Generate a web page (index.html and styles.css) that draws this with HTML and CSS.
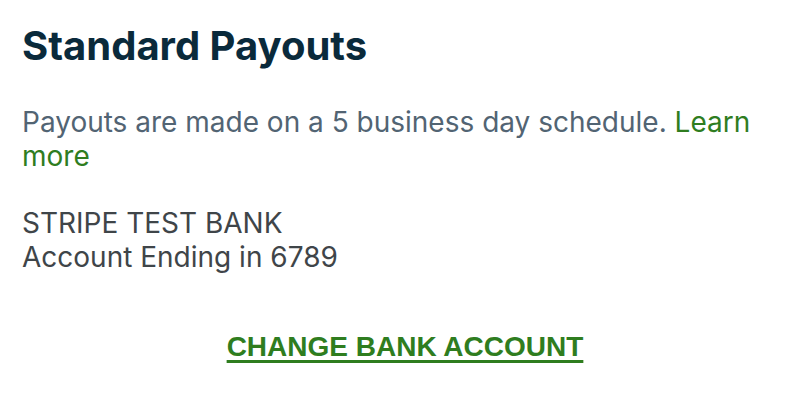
FILE: index.html
```html
<!DOCTYPE html>
<html lang="en">
<head>
    <meta charset="UTF-8">
    <meta name="viewport" content="width=device-width, initial-scale=1.0">
    <title>Standard Payouts</title>
    <link rel="stylesheet" href="styles.css">
</head>
<body>
    <div class="payouts">
        <h1 class="judul">Standard Payouts</h1>
        <p class="keterangan">Payouts are made on a 5 business day schedule. <a href="#" class="tautan">Learn more</a></p>
        <div class="bank">
            <div>STRIPE TEST BANK</div>
            <div>Account Ending in 6789</div>
        </div>
        <div class="aksi">
            <a href="#" class="ganti">CHANGE BANK ACCOUNT</a>
        </div>
    </div>
</body>
</html>
```

FILE: styles.css
```css
body {
    margin: 0;
    background-color: #fff;
    font-family: Inter, "Noto Sans", sans-serif;
}

.payouts {
    padding: 22px 12px 0 22px;
}

.judul {
    margin: 0;
    font-size: 40px;
    font-weight: 700;
    line-height: 48px;
    color: #0a2a3b;
}

.keterangan {
    margin: 36px 0 0;
    font-size: 28px;
    line-height: 33.6px;
    color: #526473;
}

.tautan {
    color: #2f7d1f;
    text-decoration: none;
}

.bank {
    margin-top: 33px;
    font-size: 28px;
    line-height: 34px;
    color: #3f4549;
}

.aksi {
    margin-top: 57px;
    text-align: center;
}

.ganti {
    font-family: "Liberation Sans", Arial, sans-serif;
    font-size: 28px;
    font-weight: 700;
    color: #2f7d1f;
    text-decoration: underline;
    text-decoration-thickness: 3px;
    text-underline-offset: 4px;
}
```
